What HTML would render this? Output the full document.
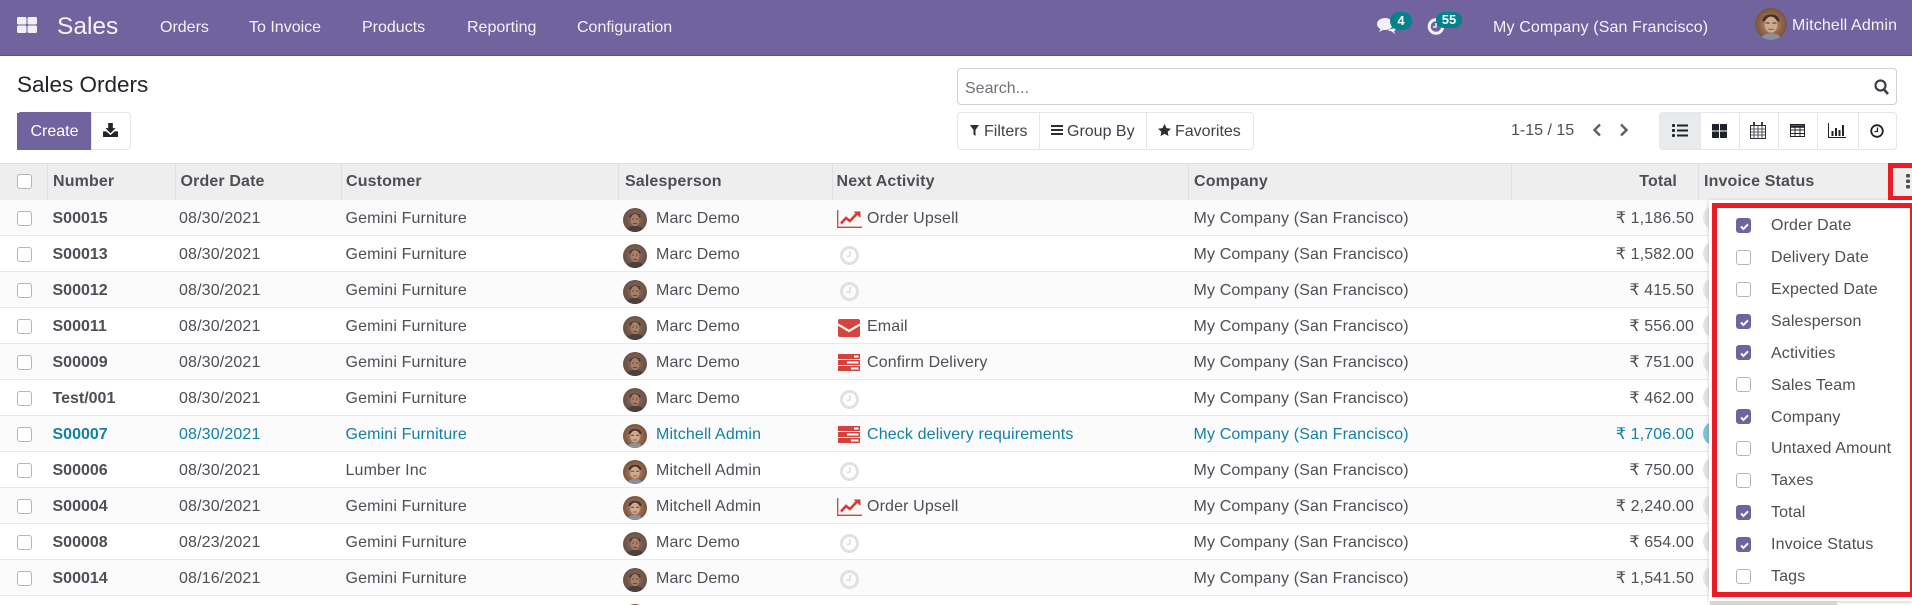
<!DOCTYPE html>
<html><head><meta charset="utf-8"><title>Sales Orders</title>
<style>
*{box-sizing:border-box}
html,body{margin:0;padding:0;width:1912px;height:605px;overflow:hidden;background:#fff;font-family:"Liberation Sans",sans-serif;font-size:16px;color:#4c4f55}
#w{position:relative;width:1912px;height:605px;overflow:hidden;background:#fff}
.a{position:absolute;white-space:nowrap}
#nav{position:absolute;left:0;top:0;width:1912px;height:56px;background:#71639e;border-bottom:1px solid #5d5181}
.n{position:absolute;color:#f4f2f8;line-height:20px;top:18px;white-space:nowrap}
.bd{position:absolute;background:#00838a;color:#fff;font-size:13px;font-weight:bold;text-align:center;border-radius:10px}
.btn{position:absolute;border:1px solid #e3e6ea;background:#fff}
.hd{position:absolute;top:163px;left:0;width:1912px;height:37px;background:#eeeeee;border-top:1px solid #dee2e6}
.th{position:absolute;top:164px;line-height:35px;font-weight:bold;color:#4c4f55;white-space:nowrap;letter-spacing:.14px}
.sep{position:absolute;top:164px;width:1px;height:35px;background:#dcdfe3}
.r{position:absolute;left:0;width:1912px;height:36px;border-bottom:1px solid #e6e8ec;line-height:36px;letter-spacing:.14px}
.r.o{background:#fbfbfc}
.r div{position:absolute;white-space:nowrap;top:1px}
.cb{width:15px;height:15px;border:1px solid #b4b6ba;border-radius:3px;background:#fff;left:17px;top:11px!important}
.no{left:52.5px;font-weight:bold;letter-spacing:0}.dt{left:179px}.cu{left:345.5px}.av{left:623px;top:8px!important;width:24px;height:24px;line-height:0}
.sp{left:656px}.ic{left:837px;line-height:0}.ac{left:867px}.co{left:1193.5px}.am{right:218px}
.pl{left:1703px;top:5px!important;width:40px;height:25px;border-radius:13px;background:#e4e4e4}
.inf,.inf div{color:#127fa8}
#dd{position:absolute;left:1709px;top:200px;width:203px;height:401px;background:#fff;box-shadow:0 1px 4px rgba(0,0,0,.2)}
#rb{position:absolute;left:1712px;top:203px;width:200px;height:394px;border:5px solid #ed1c24;border-right-width:2px}
.mc{position:absolute;left:1736px;width:15px;height:15px;border:1px solid #b4b6ba;border-radius:3px;background:#fff}
.mc.k{background:#71639e;border-color:#71639e}
.mc svg{position:absolute;left:2px;top:2px}
.ml{position:absolute;left:1771px;line-height:20px;white-space:nowrap;color:#4c4f55;letter-spacing:.14px}
</style></head><body><div id="w">
<svg width="0" height="0" style="position:absolute">
<defs>
<radialGradient id="g1" cx=".5" cy=".45" r=".6"><stop offset="0" stop-color="#9a7460"/><stop offset=".55" stop-color="#765a4d"/><stop offset="1" stop-color="#5e4a44"/></radialGradient>
<radialGradient id="g2" cx=".5" cy=".5" r=".6"><stop offset="0" stop-color="#c09a80"/><stop offset=".6" stop-color="#8c6248"/><stop offset="1" stop-color="#6a4a3a"/></radialGradient>
<clipPath id="cc"><circle cx="12" cy="12" r="12"/></clipPath>
<symbol id="marc" viewBox="0 0 24 24"><g clip-path="url(#cc)"><rect width="24" height="24" fill="url(#g1)"/><path d="M6 9C7 4 17 4 18 9l-2 1C14 8 10 8 8 10z" fill="#4a3832"/><ellipse cx="12" cy="12" rx="4.500" ry="6" fill="#a67f66"/><path d="M9 11h2M13 11h2" stroke="#54403a" stroke-width=".8"/><path d="M10 15.500h4" stroke="#5f4a40" stroke-width="1"/><path d="M3 24c1-5 5-6 9-6s8 1 9 6z" fill="#4a403c"/></g></symbol>
<symbol id="mit" viewBox="0 0 24 24"><g clip-path="url(#cc)"><rect width="24" height="24" fill="url(#g2)"/><path d="M5.500 10C5.500 3 18.500 3 18.500 10L17 10C15 7 9 7 7 10z" fill="#42302a"/><ellipse cx="12" cy="12.500" rx="4.800" ry="6" fill="#cfa98f"/><path d="M8 11.300h3M13 11.300h3" stroke="#6a5248" stroke-width="1.100"/><path d="M10 16h4" stroke="#86604c" stroke-width=".9"/><path d="M4 24c1-4 4-5 8-5s7 1 8 5z" fill="#8a8f9e"/></g></symbol>
<symbol id="clk" viewBox="0 0 19 19"><circle cx="9.500" cy="9.500" r="8" fill="none" stroke="#e1e1e1" stroke-width="3"/><path d="M10 5v5.200H6.500" fill="none" stroke="#e1e1e1" stroke-width="1.800"/></symbol>
<symbol id="up" viewBox="0 0 25 18"><path d="M.7 0v17.300H25" fill="none" stroke="#d0413a" stroke-width="1.300"/><path d="M4 13.500l5-5.500 4 3 7-7.500" fill="none" stroke="#d63a34" stroke-width="2.600"/><path d="M16.500 1.500h7v6.500z" fill="#d63a34"/></symbol>
<symbol id="em" viewBox="0 0 22 18"><rect width="22" height="18" rx="2" fill="#d9433e"/><path d="M0 5.500l11 6.500 11-6.500" fill="none" stroke="#fff" stroke-width="2.200"/></symbol>
<symbol id="ts" viewBox="0 0 22 17"><rect width="22" height="5" fill="#d4423d"/><rect y="6" width="22" height="5" fill="#d4423d"/><rect y="12" width="22" height="5" fill="#d4423d"/><rect x="16" y="1.500" width="4.500" height="2" fill="#fff"/><rect x="9" y="7.500" width="11.500" height="2" fill="#fff"/><rect x="13" y="13.500" width="7.500" height="2" fill="#fff"/></symbol>
<symbol id="chk" viewBox="0 0 11 11"><path d="M2 5.500l2.400 2.400L9 3.300" fill="none" stroke="#fff" stroke-width="2"/></symbol>
</defs></svg>

<div id="nav"></div>
<svg class="a" style="left:17px;top:17px" width="20" height="16" viewBox="0 0 20 16" fill="#f1eff6"><rect width="9.500" height="7.500" rx="1.500"/><rect x="10.500" width="9.500" height="7.500" rx="1.500"/><rect y="8.500" width="9.500" height="7.500" rx="1.500"/><rect x="10.500" y="8.500" width="9.500" height="7.500" rx="1.500"/></svg>
<div class="n" style="left:57px;top:13px;font-size:24.500px;line-height:28px">Sales</div>
<div class="n" style="left:160px">Orders</div>
<div class="n" style="left:249px">To Invoice</div>
<div class="n" style="left:362px">Products</div>
<div class="n" style="left:467px">Reporting</div>
<div class="n" style="left:577px">Configuration</div>
<svg class="a" style="left:1377px;top:17px" width="20" height="18" viewBox="0 0 20 18" fill="#f3f1f7"><ellipse cx="8" cy="7" rx="8" ry="6"/><path d="M4 11l-2 4 6-3z"/><path d="M13 12c3 0 5-1 6-3 1 3-1 5-2 5l1 3-4-3h-3z"/></svg>
<div class="bd" style="left:1390px;top:12px;width:22px;height:18px;line-height:17px">4</div>
<svg class="a" style="left:1427px;top:18px" width="18" height="17" viewBox="0 0 18 17"><circle cx="9" cy="8.500" r="6.800" fill="none" stroke="#f3f1f7" stroke-width="3"/><path d="M9 5v4H6" fill="none" stroke="#f3f1f7" stroke-width="1.500"/></svg>
<div class="bd" style="left:1436px;top:12px;width:26px;height:16px;line-height:15px">55</div>
<div class="n" style="left:1493px;letter-spacing:.14px">My Company (San Francisco)</div>
<svg class="a" style="left:1755px;top:8px" width="32" height="32"><use href="#mit"/></svg>
<div class="n" style="left:1792px;top:16px;letter-spacing:.14px">Mitchell Admin</div>

<div class="a" style="left:17px;top:71px;font-size:22.500px;line-height:28px;color:#212529">Sales Orders</div>
<div class="a" style="left:17px;top:113px;width:75px;height:37px;background:#71639e;color:#fff;text-align:center;line-height:37px"></div>
<div class="a" style="left:17px;top:112px;width:75px;height:38px;background:#71639e;color:#fff;border-radius:4px 0 0 4px;text-align:center;line-height:40px">Create</div>
<div class="btn" style="left:91px;top:112px;width:40px;height:38px;border-radius:0 4px 4px 0"></div>
<svg class="a" style="left:103px;top:123px" width="15" height="14" viewBox="0 0 16 15" fill="#212529"><path d="M5.500 0h5v5.500h3L8 11 2.500 5.500h3z"/><path d="M0 9h3.500L8 13l4.500-4H16v6H0z"/></svg>

<div class="a" style="left:957px;top:68px;width:940px;height:37px;border:1px solid #ced1d4;border-radius:4px;background:#fff"></div>
<div class="a" style="left:965px;top:79px;line-height:20px;color:#6d7278">Search...</div>
<svg class="a" style="left:1874px;top:79px" width="15" height="16" viewBox="0 0 15 16"><circle cx="6.500" cy="6.500" r="5" fill="none" stroke="#3c4045" stroke-width="2.200"/><path d="M10 10.500l4 4.500" stroke="#3c4045" stroke-width="2.600"/></svg>

<div class="btn" style="left:957px;top:112px;width:297px;height:38px;border-radius:4px"></div>
<div class="a" style="left:1039px;top:112px;width:1px;height:38px;background:#e3e6ea"></div>
<div class="a" style="left:1146px;top:112px;width:1px;height:38px;background:#e3e6ea"></div>
<svg class="a" style="left:970px;top:125px" width="9" height="11" viewBox="0 0 9 11" fill="#2b2e33"><path d="M0 0h9L5.500 5v6l-2-1.500V5z"/></svg>
<div class="a" style="left:984px;top:122px;line-height:20px;color:#3e4248">Filters</div>
<svg class="a" style="left:1051px;top:125px" width="12" height="10" viewBox="0 0 12 10" fill="#2b2e33"><rect width="12" height="2"/><rect y="4" width="12" height="2"/><rect y="8" width="12" height="2"/></svg>
<div class="a" style="left:1067px;top:122px;line-height:20px;color:#3e4248">Group By</div>
<svg class="a" style="left:1158px;top:124px" width="13" height="12" viewBox="0 0 13 12" fill="#2b2e33"><path d="M6.500 0l2 4.100 4.500.6-3.300 3.100.8 4.200-4-2.100-4 2.100.8-4.200L0 4.700l4.500-.6z"/></svg>
<div class="a" style="left:1175px;top:122px;line-height:20px;color:#3e4248">Favorites</div>

<div class="a" style="left:1511px;top:121px;line-height:20px">1-15 / 15</div>
<svg class="a" style="left:1592px;top:123px" width="10" height="14" viewBox="0 0 10 14"><path d="M8 1.500L2.500 7 8 12.500" fill="none" stroke="#5b5f65" stroke-width="2.400"/></svg>
<svg class="a" style="left:1619px;top:123px" width="10" height="14" viewBox="0 0 10 14"><path d="M2 1.500L7.500 7 2 12.500" fill="none" stroke="#5b5f65" stroke-width="2.400"/></svg>

<div class="btn" style="left:1659px;top:112px;width:238px;height:38px;border-radius:4px"></div>
<div class="a" style="left:1660px;top:113px;width:40px;height:36px;background:#e9eaeb;border-radius:3px 0 0 3px"></div>
<div class="a" style="left:1700px;top:112px;width:1px;height:38px;background:#e3e6ea"></div>
<div class="a" style="left:1739px;top:112px;width:1px;height:38px;background:#e3e6ea"></div>
<div class="a" style="left:1778px;top:112px;width:1px;height:38px;background:#e3e6ea"></div>
<div class="a" style="left:1817px;top:112px;width:1px;height:38px;background:#e3e6ea"></div>
<div class="a" style="left:1858px;top:112px;width:1px;height:38px;background:#e3e6ea"></div>
<svg class="a" style="left:1672px;top:124px" width="16" height="13" viewBox="0 0 16 13" fill="#1f2226"><rect width="3" height="3" rx="1"/><rect x="5" y=".5" width="11" height="2"/><rect y="5" width="3" height="3" rx="1"/><rect x="5" y="5.500" width="11" height="2"/><rect y="10" width="3" height="3" rx="1"/><rect x="5" y="10.500" width="11" height="2"/></svg>
<svg class="a" style="left:1712px;top:124px" width="15" height="14" viewBox="0 0 15 14" fill="#1f2226"><rect width="7" height="6.500" rx=".5"/><rect x="8" width="7" height="6.500" rx=".5"/><rect y="7.500" width="7" height="6.500" rx=".5"/><rect x="8" y="7.500" width="7" height="6.500" rx=".5"/></svg>
<svg class="a" style="left:1750px;top:122px" width="16" height="17" viewBox="0 0 16 17" fill="none" stroke="#2a2d31"><rect x=".5" y="3.500" width="15" height="13"/><path d="M.5 7h15M.5 10h15M.5 13h15M4 4v12M8 4v12M12 4v12" stroke-width=".8"/><path d="M4 0v4M12 0v4" stroke-width="1.800"/></svg>
<svg class="a" style="left:1790px;top:124px" width="15" height="13" viewBox="0 0 15 13" fill="none" stroke="#1f2226"><rect x=".5" y=".5" width="14" height="12"/><path d="M0 2.500h15" stroke-width="2.500"/><path d="M0 6h15M0 9.500h15M5 2v11M10 2v11" stroke-width=".9"/></svg>
<svg class="a" style="left:1828px;top:123px" width="18" height="15" viewBox="0 0 18 15" fill="#1f2226"><path d="M.5 0v14.500H18" fill="none" stroke="#1f2226"/><rect x="3.500" y="8" width="2" height="5"/><rect x="7" y="5" width="2" height="8"/><rect x="10.500" y="7" width="2" height="6"/><rect x="14" y="2" width="2" height="11"/></svg>
<svg class="a" style="left:1870px;top:124px" width="14" height="14" viewBox="0 0 14 14"><circle cx="7" cy="7" r="5.800" fill="none" stroke="#1f2226" stroke-width="1.800"/><path d="M7.500 3.500v4H4.500" fill="none" stroke="#1f2226" stroke-width="1.300"/></svg>

<div class="hd"></div>
<div class="a" style="left:17px;top:174px;width:15px;height:15px;border:1px solid #b4b6ba;border-radius:3px;background:#fff"></div>
<div class="sep" style="left:47px"></div><div class="sep" style="left:175px"></div><div class="sep" style="left:341px"></div><div class="sep" style="left:618px"></div><div class="sep" style="left:832px"></div><div class="sep" style="left:1188px"></div><div class="sep" style="left:1511px"></div><div class="sep" style="left:1698px"></div>
<div class="th" style="left:53px">Number</div>
<div class="th" style="left:180.500px">Order Date</div>
<div class="th" style="left:346px">Customer</div>
<div class="th" style="left:625px">Salesperson</div>
<div class="th" style="left:836.500px">Next Activity</div>
<div class="th" style="left:1194px">Company</div>
<div class="th" style="right:235px">Total</div>
<div class="th" style="left:1704px">Invoice Status</div>

<div class="r o" style="top:200px"><div class="cb"></div><div class="no">S00015</div><div class="dt">08/30/2021</div><div class="cu">Gemini Furniture</div><div class="av"><svg width="24" height="24"><use href="#marc"/></svg></div><div class="sp">Marc Demo</div><div class="ic" style="top:10px"><svg width="25" height="18"><use href="#up"/></svg></div><div class="ac">Order Upsell</div><div class="co">My Company (San Francisco)</div><div class="am">₹ 1,186.50</div><div class="pl"></div></div>
<div class="r" style="top:236px"><div class="cb"></div><div class="no">S00013</div><div class="dt">08/30/2021</div><div class="cu">Gemini Furniture</div><div class="av"><svg width="24" height="24"><use href="#marc"/></svg></div><div class="sp">Marc Demo</div><div class="ic" style="left:840px;top:10px"><svg width="19" height="19"><use href="#clk"/></svg></div><div class="co">My Company (San Francisco)</div><div class="am">₹ 1,582.00</div><div class="pl"></div></div>
<div class="r o" style="top:272px"><div class="cb"></div><div class="no">S00012</div><div class="dt">08/30/2021</div><div class="cu">Gemini Furniture</div><div class="av"><svg width="24" height="24"><use href="#marc"/></svg></div><div class="sp">Marc Demo</div><div class="ic" style="left:840px;top:10px"><svg width="19" height="19"><use href="#clk"/></svg></div><div class="co">My Company (San Francisco)</div><div class="am">₹ 415.50</div><div class="pl"></div></div>
<div class="r" style="top:308px"><div class="cb"></div><div class="no">S00011</div><div class="dt">08/30/2021</div><div class="cu">Gemini Furniture</div><div class="av"><svg width="24" height="24"><use href="#marc"/></svg></div><div class="sp">Marc Demo</div><div class="ic" style="left:838px;top:11px"><svg width="22" height="18"><use href="#em"/></svg></div><div class="ac">Email</div><div class="co">My Company (San Francisco)</div><div class="am">₹ 556.00</div><div class="pl"></div></div>
<div class="r o" style="top:344px"><div class="cb"></div><div class="no">S00009</div><div class="dt">08/30/2021</div><div class="cu">Gemini Furniture</div><div class="av"><svg width="24" height="24"><use href="#marc"/></svg></div><div class="sp">Marc Demo</div><div class="ic" style="left:838px;top:10px"><svg width="22" height="17"><use href="#ts"/></svg></div><div class="ac">Confirm Delivery</div><div class="co">My Company (San Francisco)</div><div class="am">₹ 751.00</div><div class="pl"></div></div>
<div class="r" style="top:380px"><div class="cb"></div><div class="no">Test/001</div><div class="dt">08/30/2021</div><div class="cu">Gemini Furniture</div><div class="av"><svg width="24" height="24"><use href="#marc"/></svg></div><div class="sp">Marc Demo</div><div class="ic" style="left:840px;top:10px"><svg width="19" height="19"><use href="#clk"/></svg></div><div class="co">My Company (San Francisco)</div><div class="am">₹ 462.00</div><div class="pl"></div></div>
<div class="r o inf" style="top:416px"><div class="cb"></div><div class="no">S00007</div><div class="dt">08/30/2021</div><div class="cu">Gemini Furniture</div><div class="av"><svg width="24" height="24"><use href="#mit"/></svg></div><div class="sp">Mitchell Admin</div><div class="ic" style="left:838px;top:10px"><svg width="22" height="17"><use href="#ts"/></svg></div><div class="ac">Check delivery requirements</div><div class="co">My Company (San Francisco)</div><div class="am">₹ 1,706.00</div><div class="pl" style="background:#7fc1d6"></div></div>
<div class="r" style="top:452px"><div class="cb"></div><div class="no">S00006</div><div class="dt">08/30/2021</div><div class="cu">Lumber Inc</div><div class="av"><svg width="24" height="24"><use href="#mit"/></svg></div><div class="sp">Mitchell Admin</div><div class="ic" style="left:840px;top:10px"><svg width="19" height="19"><use href="#clk"/></svg></div><div class="co">My Company (San Francisco)</div><div class="am">₹ 750.00</div><div class="pl"></div></div>
<div class="r o" style="top:488px"><div class="cb"></div><div class="no">S00004</div><div class="dt">08/30/2021</div><div class="cu">Gemini Furniture</div><div class="av"><svg width="24" height="24"><use href="#mit"/></svg></div><div class="sp">Mitchell Admin</div><div class="ic" style="top:10px"><svg width="25" height="18"><use href="#up"/></svg></div><div class="ac">Order Upsell</div><div class="co">My Company (San Francisco)</div><div class="am">₹ 2,240.00</div><div class="pl"></div></div>
<div class="r" style="top:524px"><div class="cb"></div><div class="no">S00008</div><div class="dt">08/23/2021</div><div class="cu">Gemini Furniture</div><div class="av"><svg width="24" height="24"><use href="#marc"/></svg></div><div class="sp">Marc Demo</div><div class="ic" style="left:840px;top:10px"><svg width="19" height="19"><use href="#clk"/></svg></div><div class="co">My Company (San Francisco)</div><div class="am">₹ 654.00</div><div class="pl"></div></div>
<div class="r o" style="top:560px"><div class="cb"></div><div class="no">S00014</div><div class="dt">08/16/2021</div><div class="cu">Gemini Furniture</div><div class="av"><svg width="24" height="24"><use href="#marc"/></svg></div><div class="sp">Marc Demo</div><div class="ic" style="left:840px;top:10px"><svg width="19" height="19"><use href="#clk"/></svg></div><div class="co">My Company (San Francisco)</div><div class="am">₹ 1,541.50</div><div class="pl"></div></div>
<div class="r" style="top:596px"><div class="av"><svg width="24" height="24"><use href="#marc"/></svg></div><div class="ic" style="left:840px;top:10px"><svg width="19" height="19"><use href="#clk"/></svg></div></div>

<div class="a" style="left:1888px;top:163px;width:24px;height:38px;border:5px solid #ed1c24;border-right:0"></div>
<svg class="a" style="left:1906px;top:174px" width="4" height="15" viewBox="0 0 4 15" fill="#4c4f55"><rect width="4" height="3.500" rx="1"/><rect y="5.500" width="4" height="3.500" rx="1"/><rect y="11" width="4" height="3.500" rx="1"/></svg>

<div id="dd"></div>
<div class="a" style="left:1710px;top:601px;width:127px;height:4px;background:#d5d5d5"></div>
<div id="rb"></div>
<div class="mc k" style="top:218px"><svg width="11" height="11"><use href="#chk"/></svg></div><div class="ml" style="top:216px">Order Date</div>
<div class="mc" style="top:250px"></div><div class="ml" style="top:248px">Delivery Date</div>
<div class="mc" style="top:282px"></div><div class="ml" style="top:280px">Expected Date</div>
<div class="mc k" style="top:314px"><svg width="11" height="11"><use href="#chk"/></svg></div><div class="ml" style="top:312px">Salesperson</div>
<div class="mc k" style="top:345px"><svg width="11" height="11"><use href="#chk"/></svg></div><div class="ml" style="top:344px">Activities</div>
<div class="mc" style="top:377px"></div><div class="ml" style="top:376px">Sales Team</div>
<div class="mc k" style="top:409px"><svg width="11" height="11"><use href="#chk"/></svg></div><div class="ml" style="top:408px">Company</div>
<div class="mc" style="top:441px"></div><div class="ml" style="top:439px">Untaxed Amount</div>
<div class="mc" style="top:473px"></div><div class="ml" style="top:471px">Taxes</div>
<div class="mc k" style="top:505px"><svg width="11" height="11"><use href="#chk"/></svg></div><div class="ml" style="top:503px">Total</div>
<div class="mc k" style="top:537px"><svg width="11" height="11"><use href="#chk"/></svg></div><div class="ml" style="top:535px">Invoice Status</div>
<div class="mc" style="top:569px"></div><div class="ml" style="top:567px">Tags</div>
</div></body></html>
